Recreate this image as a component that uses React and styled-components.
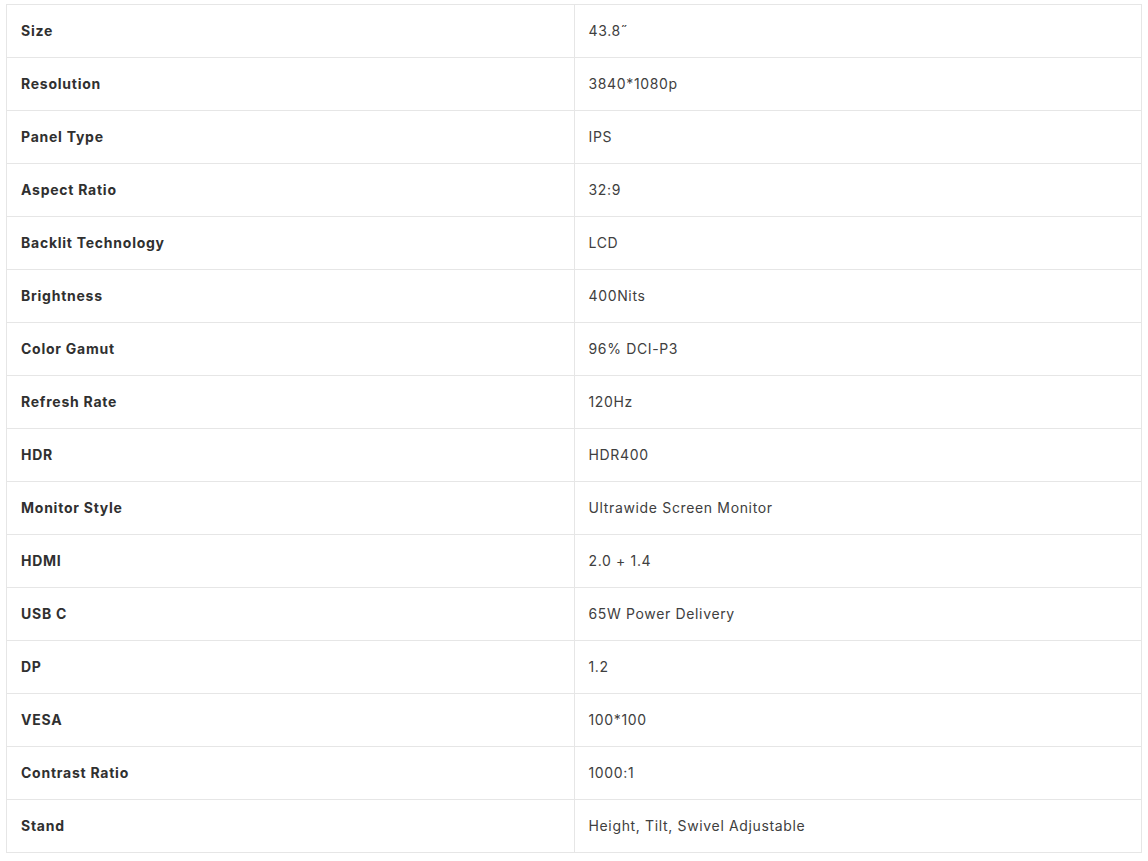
import React from "react";
import styled, { createGlobalStyle } from "styled-components";

const Global = createGlobalStyle`
  html, body { margin: 0; padding: 0; background: #fff; }
  body { font-family: "Inter", "Open Sans", sans-serif; }
`;

const Wrap = styled.div`
  padding: 4px 6px;
`;

const Table = styled.table`
  width: 100%;
  border-collapse: collapse;
  table-layout: fixed;
`;

const Row = styled.tr`
  height: 53px;
`;

const Cell = styled.td`
  border: 1px solid #e6e6e6;
  padding: 0 14px 2px;
  font-size: 14px;
  line-height: 21px;
  letter-spacing: ${(p) => (p.$label ? "0.75px" : "0.65px")};
  font-weight: ${(p) => (p.$label ? 700 : 400)};
  color: ${(p) => (p.$label ? "#303030" : "#404040")};
  vertical-align: middle;
`;

const specs = [
  ["Size", "43.8\u02DD"],
  ["Resolution", "3840*1080p"],
  ["Panel Type", "IPS"],
  ["Aspect Ratio", "32:9"],
  ["Backlit Technology", "LCD"],
  ["Brightness", "400Nits"],
  ["Color Gamut", "96% DCI-P3"],
  ["Refresh Rate", "120Hz"],
  ["HDR", "HDR400"],
  ["Monitor Style", "Ultrawide Screen Monitor"],
  ["HDMI", "2.0 + 1.4"],
  ["USB C", "65W Power Delivery"],
  ["DP", "1.2"],
  ["VESA", "100*100"],
  ["Contrast Ratio", "1000:1"],
  ["Stand", "Height, Tilt, Swivel Adjustable"],
];

export default function App() {
  return (
    <>
      <Global />
      <Wrap>
        <Table>
          <tbody>
            {specs.map(([k, v]) => (
              <Row key={k}>
                <Cell $label>{k}</Cell>
                <Cell>{v}</Cell>
              </Row>
            ))}
          </tbody>
        </Table>
      </Wrap>
    </>
  );
}
